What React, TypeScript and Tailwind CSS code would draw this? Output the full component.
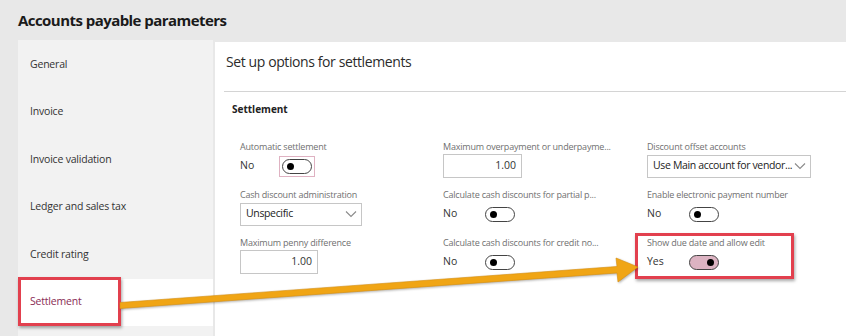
import React from "react";

type Field =
  | { kind: "toggle"; label: string; on: boolean; focus?: boolean }
  | { kind: "number"; label: string; value: string; width: string }
  | { kind: "select"; label: string; value: string; width: string };

const navItems = ["General", "Invoice", "Invoice validation", "Ledger and sales tax", "Credit rating", "Settlement"];

const fields: Field[] = [
  { kind: "toggle", label: "Automatic settlement", on: false, focus: true },
  { kind: "number", label: "Maximum overpayment or underpayme...", value: "1.00", width: "w-[79px]" },
  { kind: "select", label: "Discount offset accounts", value: "Use Main account for vendor...", width: "w-[164px]" },
  { kind: "select", label: "Cash discount administration", value: "Unspecific", width: "w-[122px]" },
  { kind: "toggle", label: "Calculate cash discounts for partial p...", on: false },
  { kind: "toggle", label: "Enable electronic payment number", on: false },
  { kind: "number", label: "Maximum penny difference", value: "1.00", width: "w-[78px]" },
  { kind: "toggle", label: "Calculate cash discounts for credit no...", on: false },
  { kind: "toggle", label: "Show due date and allow edit", on: true },
];

function Toggle({ on, focus }: { on: boolean; focus?: boolean }) {
  return (
    <div className={`p-[2px] border ${focus ? "border-[#dfb2c2]" : "border-transparent"}`}>
      <div
        className={`w-[30px] h-[15px] rounded-full border-[1.5px] border-[#444] flex items-center px-[4px] ${
          on ? "bg-[#dcb3c2] justify-end" : "bg-white justify-start"
        }`}
      >
        <div className="w-[7px] h-[7px] rounded-full bg-black" />
      </div>
    </div>
  );
}

function Chevron() {
  return (
    <svg width="12" height="8" viewBox="0 0 12 8" className="shrink-0">
      <path d="M1 1.5 L6 6.5 L11 1.5" fill="none" stroke="#8a8a8a" strokeWidth="1.1" />
    </svg>
  );
}

function FieldView({ f }: { f: Field }) {
  return (
    <div className="flex flex-col h-[48px]">
      <div className="h-[14px] leading-[14px] text-[9px] tracking-[-0.2px] text-[#707070] whitespace-nowrap">
        {f.label}
      </div>
      <div className="h-[24px] flex items-center">
        {f.kind === "toggle" && (
          <div className="flex items-center">
            <span className="w-[39px] text-[10.5px] text-[#333]">{f.on ? "Yes" : "No"}</span>
            <Toggle on={f.on} focus={f.focus} />
          </div>
        )}
        {f.kind === "number" && (
          <div
            className={`${f.width} h-[24px] border border-[#c6c6c6] bg-white flex items-center justify-end pr-[5px] text-[10.5px] text-[#333]`}
          >
            {f.value}
          </div>
        )}
        {f.kind === "select" && (
          <div
            className={`${f.width} h-[23px] border border-[#c6c6c6] bg-white flex items-center justify-between pl-[5px] pr-[4px] text-[10.5px] tracking-[-0.35px] text-[#222] whitespace-nowrap`}
          >
            <span>{f.value}</span>
            <Chevron />
          </div>
        )}
      </div>
    </div>
  );
}

export default function App() {
  return (
    <div
      className="relative w-[846px] h-[336px] overflow-hidden bg-[#e8e8e8] flex flex-col"
      style={{ fontFamily: '"Open Sans", "Noto Sans", sans-serif' }}
    >
      <div className="h-10 shrink-0 flex items-center pl-[18px]">
        <h1 className="text-[15px] font-bold text-[#1a1a1a] tracking-[-0.55px]">Accounts payable parameters</h1>
      </div>

      <div className="flex flex-1 min-h-0">
        <nav className="ml-[18px] w-[195px] shrink-0 bg-[#f2f2f2] pt-px">
          {navItems.map((item) => {
            const active = item === "Settlement";
            return (
              <div
                key={item}
                className={`h-[47.5px] flex items-center text-[10.5px] tracking-[-0.2px] ${
                  active ? "bg-white text-[#8a2d55] border-l-[3px] border-[#8a2d55] pl-[9px]" : "text-[#333] pl-[12px]"
                }`}
              >
                {item}
              </div>
            );
          })}
        </nav>

        <main className="ml-[2px] mt-[2px] flex-1 min-w-0 bg-white">
          <div className="h-[50px] ml-[9px] border-b border-[#d4d4d4] pt-[10px]">
            <h2 className="-ml-[9px] pl-[11px] text-[14px] leading-[20px] tracking-[-0.4px] text-[#2b2b2b]">
              Set up options for settlements
            </h2>
          </div>
          <div className="pl-[17px] pt-[9px] text-[10px] font-bold text-[#222] leading-[16px]">Settlement</div>
          <div className="mt-[23px] ml-[25px] grid grid-cols-[203px_204px_180px]">
            {fields.map((f) => (
              <FieldView key={f.label} f={f} />
            ))}
          </div>
        </main>
      </div>

      {/* annotation overlays */}
      <div className="absolute left-[18px] top-[277px] w-[103px] h-[49px] border-[3px] border-[#e2404e] shadow-[1px_2px_3px_rgba(0,0,0,0.35)]" />
      <div className="absolute left-[635px] top-[233px] w-[159px] h-[46px] border-[3px] border-[#e2404e] shadow-[1px_2px_3px_rgba(0,0,0,0.35)]" />
      <svg className="absolute left-0 top-0" width="846" height="336" viewBox="0 0 846 336">
        <polygon
          points="120,302.5 617,266.5 616,258 638,267 618,282 617,273 120,308.5"
          fill="#f0a515"
          stroke="#d98f0c"
          strokeWidth="0.6"
          style={{ filter: "drop-shadow(1px 1.5px 1px rgba(0,0,0,0.3))" }}
        />
      </svg>
    </div>
  );
}
